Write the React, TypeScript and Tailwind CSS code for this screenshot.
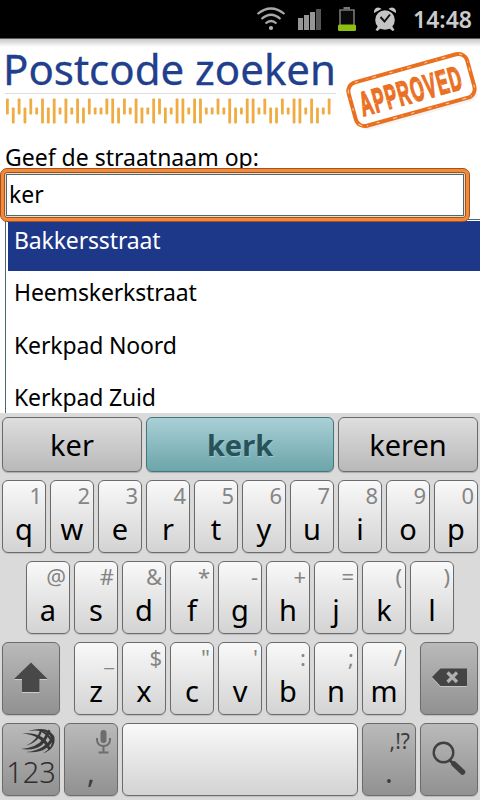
import type { ReactNode } from "react";

interface KeyData {
  main: string;
  alt: string;
}

const toKeys = (letters: string, alts: string): KeyData[] =>
  letters.split("").map((main, i) => ({ main, alt: alts[i] }));

const topRow = toKeys("qwertyuiop", "1234567890");
const homeRow = toKeys("asdfghjkl", "@#&*-+=()");
const bottomRow = toKeys("zxcvbnm", "_$\"':;/");

const streets = ["Bakkersstraat", "Heemskerkstraat", "Kerkpad Noord", "Kerkpad Zuid"];

// F = full bar, A = ascender, D = descender, S = short tracker
const barcode = "ADADASFDFSFSFDASSAFDASFDSFADSFFSFFSSASFDSFFSADDASFFSFDSA";
const barShapes: Record<string, [number, number]> = {
  F: [0, 25],
  A: [0, 16],
  D: [9, 16],
  S: [9, 7],
};

function StatusBar() {
  return (
    <div className="flex h-[38px] items-center bg-black pl-[256px]">
      <svg className="h-[38px] w-[150px] shrink-0" viewBox="256 0 150 38">
        <g fill="none" stroke="#a8a8a8" strokeWidth="2.2">
          <path d="M257.5 14Q271 3 284.500 14" />
          <path d="M261.500 19Q271 10.500 280.500 19" />
          <path d="M265.500 23.500Q271 18.500 276.500 23.500" />
        </g>
        <circle cx="271" cy="28" r="2.1" fill="#b4b4b4" />
        <g fill="#969696">
          <rect x="298" y="18" width="5" height="12" />
          <rect x="304" y="15" width="5" height="15" />
          <rect x="310" y="12" width="5" height="18" />
          <rect x="316" y="9" width="5" height="21" fill="#555" />
        </g>
        <path d="M340 25V10H354V25" fill="#0a0a0a" stroke="#777" strokeWidth="1.6" />
        <rect x="343.500" y="7" width="6.500" height="2.500" fill="#777" />
        <rect x="338" y="24.500" width="18" height="6.500" rx="1.500" fill="#8fbf10" />
        <g fill="#c4c4c4">
          <circle cx="385" cy="20" r="9.800" />
          <path d="M374 13Q373.500 8 378 7.500Q380.500 7.500 381.500 9Z" />
          <path d="M396 13Q396.500 8 392 7.500Q389.500 7.500 388.500 9Z" />
          <path d="M378 26L375.500 30L377.500 31L381 28ZM392 26L394.500 30L392.500 31L389 28Z" />
        </g>
        <path d="M380.500 17L384.500 21.500L390 14.500" fill="none" stroke="#111" strokeWidth="2" />
      </svg>
      <span className="ml-[7px] text-[23px] leading-none font-semibold text-[#cbcbcb]">14:48</span>
    </div>
  );
}

function Barcode() {
  return (
    <svg className="mt-[4px] h-[26px] w-[336px]" viewBox="0 0 336 26">
      {barcode.split("").map((type, i) => {
        const [y, height] = barShapes[type];
        return (
          <rect
            key={i}
            x={6 + i * 5.85}
            y={y + 0.5}
            width={2.8}
            height={height}
            rx={0.8}
            fill="#efac42"
          />
        );
      })}
    </svg>
  );
}

function ApprovedStamp() {
  return (
    <svg className="h-[94px] w-[140px] overflow-visible" viewBox="340 42 140 94">
      <g transform="rotate(-15.500 411.500 90)">
        <rect x="352" y="72" width="123" height="45" rx="9" fill="#f3f3f3" />
        <rect x="350" y="67.500" width="123" height="45" rx="9" fill="#fff" stroke="#e9701e" strokeWidth="4" />
        <rect
          x="350"
          y="67.500"
          width="123"
          height="45"
          rx="9"
          fill="none"
          stroke="#fbd0ae"
          strokeWidth="1"
          strokeDasharray="3 9 1 5 4 14"
        />
        <text
          transform="translate(358 102.500) scale(0.5 1)"
          fontSize="34"
          strokeWidth="1.6"
          letterSpacing="2.6"
          className="fill-[#ea7023] stroke-[#ea7023] font-['Liberation_Sans',sans-serif] font-bold"
        >
          APPROVED
        </text>
        <g stroke="#fff" strokeWidth="0.700" opacity="0.5">
          <path d="M359 86L463 82M360 93L462 96" strokeDasharray="2 7 5 11" />
          <path d="M365 80L388 101M401 80L414 101M433 80L447 101" strokeDasharray="3 4" />
        </g>
      </g>
    </svg>
  );
}

function Header() {
  return (
    <div className="flex h-[104px] border-t border-[#5c585c] bg-linear-to-b from-[#c8c8c8] to-white to-[8px]">
      <div className="flex w-[340px] flex-col">
        <h1 className="mt-[6px] ml-[3px] h-[48px] text-[42px] leading-[48px] whitespace-nowrap text-[#213f8d] [-webkit-text-stroke:0.3px_#213f8d]">
          Postcode zoeken
        </h1>
        <div className="ml-[5px] h-px w-[331px] bg-[#dcdce2]" />
        <Barcode />
      </div>
      <div className="pt-[3px]">
        <ApprovedStamp />
      </div>
    </div>
  );
}

function SearchForm() {
  return (
    <div className="h-[77px]">
      <div className="h-[26px] pl-[5px] text-[23px] leading-[30px] whitespace-nowrap text-black">
        Geef de straatnaam op:
      </div>
      <div className="relative h-[54px] w-[470px] rounded-[7px] border border-[#a8501c] bg-[#f08a3c] p-[3px]">
        <div className="h-full rounded-[3px] border border-[#a8501c] bg-[#e4ddd0] p-px">
          <div className="h-full border border-[#4c6a70] bg-white pl-[2px] text-[23px] leading-[38px] text-black">
            ker
          </div>
        </div>
      </div>
    </div>
  );
}

function Suggestions() {
  return (
    <div className="ml-[5px] h-[194px] overflow-hidden border-t border-l border-[#47696f] bg-white pt-px pl-[2px]">
      {streets.map((street, i) => (
        <div
          key={street}
          className={`pl-[6px] text-[23px] tracking-[-0.15px] ${
            i === 0
              ? "h-[50px] bg-[#1d3789] leading-[38px] text-white"
              : "h-[52.5px] pt-[2px] leading-[39px] text-black"
          }`}
        >
          {street}
        </div>
      ))}
    </div>
  );
}

function LetterKey({ main, alt }: KeyData) {
  return (
    <div className="flex h-[73px] w-[44px] flex-col rounded-[6px] border border-[#6b6b6b] bg-linear-to-b from-[#f9f9f9] to-[#d3d3d3] shadow-[0_1px_1px_#bcbcbc]">
      <div className="h-[28px] pr-[3px] text-right text-[22px] leading-[29px] text-[#858585]">
        {alt}
      </div>
      <div className="text-center text-[29px] leading-[39px] text-black">{main}</div>
    </div>
  );
}

function DarkKey({ className, children }: { className: string; children: ReactNode }) {
  return (
    <div
      className={`h-[73px] rounded-[6px] border border-[#6b6b6b] bg-linear-to-b from-[#bababa] to-[#919191] text-[#3c3c3c] shadow-[0_1px_1px_#bcbcbc] ${className}`}
    >
      {children}
    </div>
  );
}

function Candidates() {
  const base =
    "flex h-[55px] items-center justify-center rounded-[6px] border text-[29px] leading-none shadow-[0_1px_1px_#aaa]";
  return (
    <div className="flex gap-1">
      <div className={`${base} w-[140px] border-[#6b6b6b] bg-linear-to-b from-[#dedede] to-[#b9b9b9] text-black`}>
        ker
      </div>
      <div className={`${base} w-[188px] border-[#44777b] bg-linear-to-b from-[#a9d0d6] to-[#6ba5aa] font-bold text-[#28525a] [text-shadow:1px_1px_0_#9cc6cb]`}>
        kerk
      </div>
      <div className={`${base} w-[140px] border-[#6b6b6b] bg-linear-to-b from-[#dedede] to-[#b9b9b9] text-black`}>
        keren
      </div>
    </div>
  );
}

function Keyboard() {
  return (
    <div className="flex h-[387px] flex-col gap-[8px] bg-[#dadada] px-[2px] pt-[4px]">
      <Candidates />
      <div className="flex gap-1">
        {topRow.map((key) => (
          <LetterKey key={key.main} {...key} />
        ))}
      </div>
      <div className="flex justify-center gap-1">
        {homeRow.map((key) => (
          <LetterKey key={key.main} {...key} />
        ))}
      </div>
      <div className="flex justify-between">
        <DarkKey className="w-[58px]">
          <svg className="h-full w-full" viewBox="3 643 56 71">
            <path d="M31 663.500L47.500 680H39.500V693H22V680H14Z" fill="#ccc" />
            <path d="M31 662.500L47.500 679H39.500V692H22V679H14Z" fill="#484848" />
          </svg>
        </DarkKey>
        <div className="flex gap-1">
          {bottomRow.map((key) => (
            <LetterKey key={key.main} {...key} />
          ))}
        </div>
        <DarkKey className="w-[58px]">
          <svg className="h-full w-full" viewBox="421 643 56 71">
            <path d="M432 678L440.500 669.500H467V687H440.500Z" fill="#c4c4c4" />
            <path d="M432 677L440.500 668.500H467V686H440.500Z" fill="#444" />
            <path d="M447.500 672.500L457 682M457 672.500L447.500 682" stroke="#b0b0b0" strokeWidth="3.200" />
          </svg>
        </DarkKey>
      </div>
      <div className="flex gap-1">
        <DarkKey className="w-[58px]">
          <svg className="h-[31px] w-full" viewBox="3 724 56 31">
            <g fill="#383838">
              <path d="M28 731Q50 724.500 54.500 738Q55.500 749 43 753.500Q53.500 747 52 739Q48 728.500 28 731Z" />
              <path d="M22 733.500Q44 731 50.500 748.500L48.500 750Q41 734.500 22 733.500Z" />
              <path d="M36 729Q49 731 53.500 742L52.500 744Q46 732.500 36 729Z" />
              <path d="M21 749Q37 747.500 43 739Q47 733 48.500 729.500L50.500 731Q46 741 42.500 744.500Q35 751 21 749Z" />
              <path d="M26 745.500Q37 741 40.500 729L42.500 729Q40 742 26 745.500Z" />
              <path d="M26 752Q46 750.500 53 734.500L54.500 737Q48 754.500 26 752Z" />
            </g>
          </svg>
          <div className="text-center text-[29px] leading-[33px] font-light text-[#2e2e2e]">123</div>
        </DarkKey>
        <DarkKey className="w-[54px]">
          <svg className="h-[31px] w-full" viewBox="65 724 52 31">
            <rect x="100.500" y="730" width="6" height="13" rx="3" fill="#6d6d6d" />
            <path
              d="M97 738V740Q97.500 746 103.500 746Q109.500 746 110 740V738M103.500 746V752M98.500 752.500H108.500"
              fill="none"
              stroke="#6d6d6d"
              strokeWidth="2"
            />
          </svg>
          <div className="text-center text-[29px] leading-[33px]">,</div>
        </DarkKey>
        <div className="h-[73px] w-[236px] rounded-[6px] border border-[#6b6b6b] bg-linear-to-b from-[#f9f9f9] to-[#d3d3d3] shadow-[0_1px_1px_#bcbcbc]" />
        <DarkKey className="w-[54px]">
          <div className="h-[31px] pr-[5px] text-right text-[21px] leading-[34px]">,!?</div>
          <div className="text-center text-[29px] leading-[33px]">.</div>
        </DarkKey>
        <DarkKey className="w-[58px]">
          <svg className="h-full w-full" viewBox="421 724 56 71">
            <circle cx="443.500" cy="752.500" r="9.800" fill="none" stroke="#404040" strokeWidth="2.400" />
            <path d="M450 760.500L455 765" stroke="#404040" strokeWidth="3" />
            <path d="M454 764L462.500 772" stroke="#404040" strokeWidth="5.500" strokeLinecap="round" />
          </svg>
        </DarkKey>
      </div>
    </div>
  );
}

export default function App() {
  return (
    <div className="h-[800px] w-[480px] overflow-hidden bg-white font-['Noto_Sans',sans-serif]">
      <StatusBar />
      <Header />
      <SearchForm />
      <Suggestions />
      <Keyboard />
    </div>
  );
}
